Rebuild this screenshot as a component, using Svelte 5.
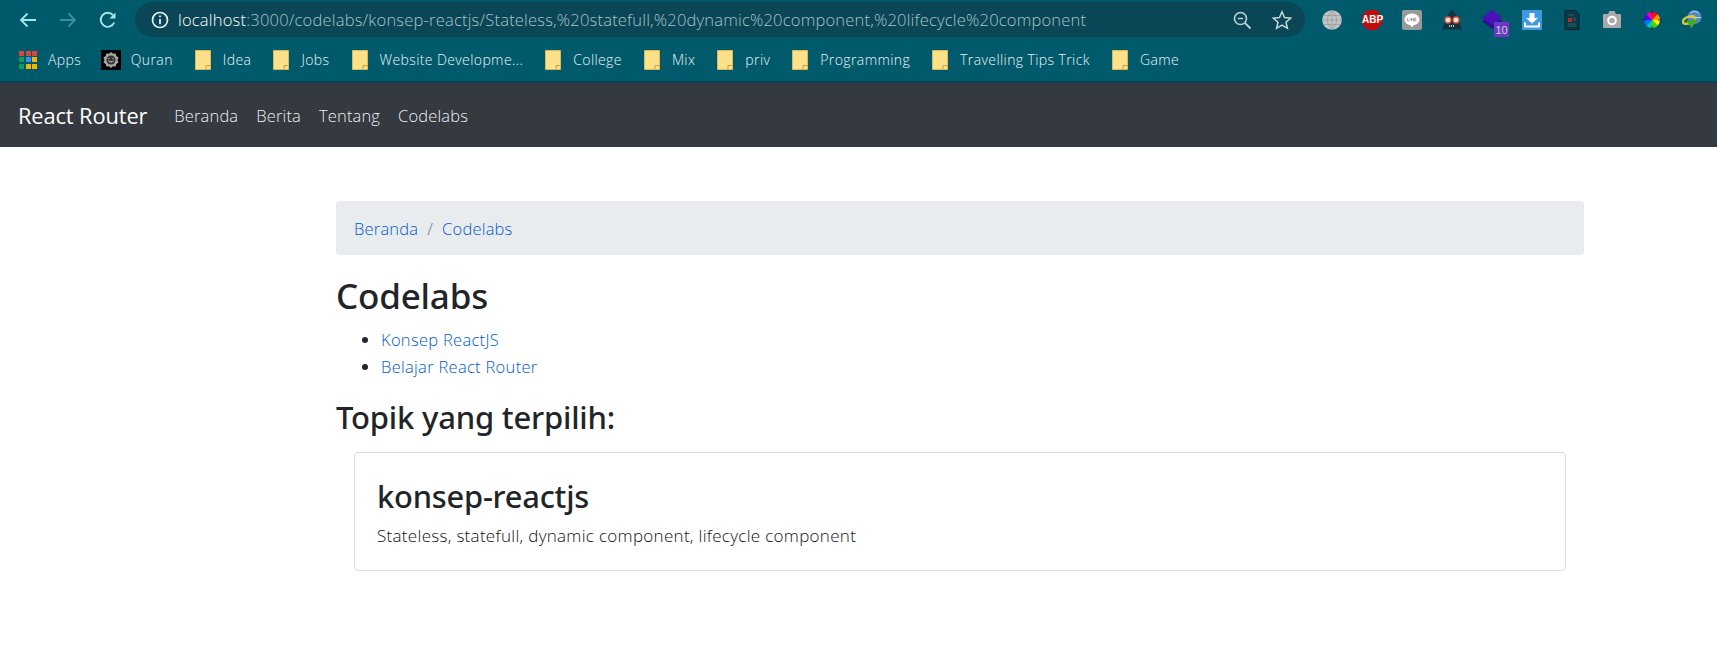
<script>
  const bookmarks = [
    { label: 'Idea' }, { label: 'Jobs' }, { label: 'Website Developme...' }, { label: 'College' },
    { label: 'Mix' }, { label: 'priv' }, { label: 'Programming' }, { label: 'Travelling Tips Trick' }, { label: 'Game' }
  ];
  const grid = [
    '#db4437','#db4437','#db4437',
    '#0f9d58','#4285f4','#f4b400',
    '#0f9d58','#f4b400','#f4b400'
  ];
  const wheel = ['#ff1010','#ff9900','#ffee00','#44dd00','#00ccaa','#0077ff','#5500ee','#ee00aa'];
  function wedge(i) {
    const a = (i * 45 - 90) * Math.PI / 180, b = ((i + 1) * 45 - 90) * Math.PI / 180, r = 8;
    return `M10 10L${10 + r * Math.cos(a)} ${10 + r * Math.sin(a)}A${r} ${r} 0 0 1 ${10 + r * Math.cos(b)} ${10 + r * Math.sin(b)}Z`;
  }
</script>

<div class="chrome">
  <div class="toolbar">
    <div class="navs">
      <svg viewBox="0 0 20 20" class="nav"><path d="M18 10H3M9.500 3.500L3 10l6.500 6.500" fill="none" stroke="#a5e6ea" stroke-width="1.800"/></svg>
      <svg viewBox="0 0 20 20" class="nav"><path d="M2 10h15M10.500 3.500L17 10l-6.500 6.500" fill="none" stroke="#3d8f9c" stroke-width="1.800"/></svg>
      <svg viewBox="0 0 20 20" class="nav"><path d="M16.200 12.500A7 7 0 1 1 15 5.200" fill="none" stroke="#a5e6ea" stroke-width="1.900"/><path d="M17.500 2.500v6h-6z" fill="#a5e6ea"/></svg>
    </div>
    <div class="omnibox">
      <svg viewBox="0 0 20 20" class="info"><circle cx="10" cy="10" r="7.500" fill="none" stroke="#e4f1f3" stroke-width="1.700"/><path d="M10 9v5.200M10 5.500v1.800" stroke="#e4f1f3" stroke-width="1.800"/></svg>
      <div class="url"><span class="host">localhost</span>:3000/codelabs/konsep-reactjs/Stateless,%20statefull,%20dynamic%20component,%20lifecycle%20component</div>
      <svg viewBox="0 0 20 20" class="omni-ic zoomic"><circle cx="8.500" cy="8.500" r="6" fill="none" stroke="#b9d2d7" stroke-width="1.600"/><path d="M13 13l5.500 5.500" stroke="#b9d2d7" stroke-width="1.800"/><path d="M5.800 8.500h5.400" stroke="#b9d2d7" stroke-width="1.400"/></svg>
      <svg viewBox="0 0 20 20" class="omni-ic star"><path d="M10 1.800l2.500 5.700 6.200.6-4.700 4.100 1.400 6.100L10 15.200l-5.400 3.100L6 12.200 1.300 8.100l6.200-.6z" fill="none" stroke="#c5dadf" stroke-width="1.500"/></svg>
    </div>
    <div class="exts">
      <div class="ext">
        <svg viewBox="0 0 20 20"><circle cx="10" cy="10" r="9.800" fill="#c2c5c5"/><path d="M.5 10h19M2 5.500h16M2 14.500h16M10 .5v19M10 .5c-6 5-6 14 0 19M10 .5c6 5 6 14 0 19" fill="none" stroke="#8f9698" stroke-width=".7"/></svg>
      </div>
      <div class="ext">
        <svg viewBox="0 0 20 20"><path d="M6 0h8l6 6v8l-6 6H6l-6-6V6z" fill="#c40c0c"/></svg>
        <span class="abp">ABP</span>
      </div>
      <div class="ext">
        <svg viewBox="0 0 20 20"><rect width="20" height="20" rx="2" fill="#9a9a9a"/><ellipse cx="10" cy="9.500" rx="7.500" ry="6" fill="#fff"/><path d="M8 14l2 3.500 2.500-3.500z" fill="#fff"/><path d="M5.500 8v3h1.500M8 8v3M9.500 11V8l2 3V8M14.500 8h-2v3h2M12.500 9.500h1.500" fill="none" stroke="#8d8d8d" stroke-width=".7"/></svg>
      </div>
      <div class="ext">
        <svg viewBox="0 0 20 20"><path d="M10 0c2 .5 3.500 4 4.500 7L20 19.500H0L5.500 7C6.500 4 8 .5 10 0z" fill="#14323f"/><circle cx="6" cy="10" r="3" fill="#f6e6da" stroke="#e8543c" stroke-width="1.300"/><circle cx="14" cy="10" r="3" fill="#f6e6da" stroke="#e8543c" stroke-width="1.300"/><path d="M7 16h6" stroke="#b8c6ca" stroke-width="2" stroke-dasharray="1 1"/></svg>
      </div>
      <div class="ext">
        <svg viewBox="0 0 20 20"><path d="M0 11l10-5 10 5-10 8z" fill="#2d0f9a"/><path d="M0 7.500L10 0l10 7.500-10 7z" fill="#4a11b8"/></svg>
        <span class="badge">10</span>
      </div>
      <div class="ext">
        <svg viewBox="0 0 20 20"><rect width="20" height="20" fill="#3d9ae0"/><path d="M7.500 3h5v5h3.500L10 13.500 4 8h3.500z" fill="#fff"/><path d="M3 12.500v4h14v-4" fill="none" stroke="#fff" stroke-width="2"/></svg>
      </div>
      <div class="ext">
        <svg viewBox="0 0 20 20"><path d="M3 .5h10l4 4v15H3z" fill="#0b3a46" stroke="#04222b"/><rect x="6" y="8" width="4" height="4" fill="#b02a30"/><path d="M6 5h6M11 8h3M11 10h3M6 14h8M6 16h8" stroke="#1e6472"/></svg>
      </div>
      <div class="ext">
        <svg viewBox="0 0 20 20"><path d="M2 4h4l1.500-3h5L14 4h4a1 1 0 0 1 1 1v12a1 1 0 0 1-1 1H2a1 1 0 0 1-1-1V5a1 1 0 0 1 1-1z" fill="#a9a9a9"/><circle cx="10" cy="10.500" r="4.800" fill="#fff"/><circle cx="10" cy="10.500" r="2.800" fill="#a9a9a9"/></svg>
      </div>
      <div class="ext">
        <svg viewBox="0 0 20 20">
          {#each wheel as c, i}<path d={wedge(i)} fill={c}/>{/each}
          <path d="M10 0v4M10 16v4M0 10h4M16 10h4" stroke="#222" stroke-width=".8"/>
        </svg>
      </div>
      <div class="ext">
        <svg viewBox="0 0 20 20"><circle cx="12.500" cy="7" r="7" fill="#4f86cc"/><path d="M8 3.500c2-2.500 7-2.500 9 0M6 7.500h13" stroke="#dbe8f4" fill="none" stroke-width=".8"/><ellipse cx="7" cy="10" rx="6.500" ry="3.200" transform="rotate(-20 7 10)" fill="none" stroke="#d9c437" stroke-width="2.400"/><path d="M4 10.500l12-1.500-6.500 9z" fill="#45a82c"/></svg>
      </div>
    </div>
  </div>

  <div class="bookmarks">
    <div class="bm apps">
      <div class="grid">{#each grid as c}<i style:background={c}></i>{/each}</div>
      <span>Apps</span>
    </div>
    <div class="bm quran">
      <svg viewBox="0 0 20 20" class="qicon"><rect width="20" height="20" fill="#000"/><path d="M10 2l2 1.800 2.700-.3.600 2.600 2.300 1.400L16.500 10l1.100 2.500-2.300 1.400-.6 2.600-2.700-.3L10 18l-2-1.800-2.700.3-.6-2.600-2.300-1.400L3.500 10 2.400 7.500l2.300-1.400.6-2.600 2.700.3z" fill="#a8a39b"/><circle cx="10" cy="10" r="4.500" fill="#333"/><path d="M7.500 10.500c1 2 4 2 5 0M8 8v1M12 8v1" stroke="#eee" fill="none" stroke-width=".9"/></svg>
      <span>Quran</span>
    </div>
    {#each bookmarks as b}
      <div class="bm">
        <svg viewBox="0 0 16 20" class="folder"><path d="M.5 .5h15v19H.5z" fill="#fde08a" stroke="#d9bb5c"/><path d="M11 19.500v-4h4.500" fill="none" stroke="#c9a23a"/></svg>
        <span>{b.label}</span>
      </div>
    {/each}
  </div>
</div>

<nav class="navbar">
  <a class="brand" href="#/">React Router</a>
  <a class="link" href="#/">Beranda</a>
  <a class="link" href="#/">Berita</a>
  <a class="link" href="#/">Tentang</a>
  <a class="link" href="#/">Codelabs</a>
</nav>

<main class="container">
  <ol class="breadcrumb">
    <li><a href="#/">Beranda</a></li>
    <li class="sep">/</li>
    <li><a href="#/">Codelabs</a></li>
  </ol>
  <h2 class="title">Codelabs</h2>
  <ul class="topics">
    <li><a href="#/">Konsep ReactJS</a></li>
    <li><a href="#/">Belajar React Router</a></li>
  </ul>
  <h3 class="sub">Topik yang terpilih:</h3>
  <section class="card">
    <h2 class="card-title">konsep-reactjs</h2>
    <p>Stateless, statefull, dynamic component, lifecycle component</p>
  </section>
</main>

<style>
  :global(body) {
    margin: 0;
    background: #fff;
    font-family: "Open Sans", "Noto Sans", sans-serif;
    color: #212529;
    overflow: hidden;
  }
  a { text-decoration: none; }

  .chrome { background: #015a6c; height: 81px; border-bottom: 2px solid #06424f; }
  .toolbar { height: 40px; display: flex; align-items: center; }
  .navs { display: flex; gap: 20px; margin-left: 18px; width: 117px; flex: none; }
  .nav { width: 20px; height: 20px; }
  .omnibox {
    width: 1170px; height: 35px; margin-top: -1px; border-radius: 18px; background: #0a4655; flex: none;
    display: flex; align-items: center; position: relative;
  }
  .info { width: 20px; height: 20px; margin-left: 15px; flex: none; }
  .url {
    margin-left: 8px; flex: 1; font-size: 16.500px; letter-spacing: .2px; color: #a6c3ca; white-space: nowrap; font-weight: 300;
  }
  .host { color: #fff; }
  .omni-ic { width: 20px; height: 20px; flex: none; }
  .zoomic { margin-right: 20px; }
  .star { margin-right: 13px; }
  .exts { display: flex; margin-left: 17px; gap: 20px; flex: none; }
  .ext { width: 20px; height: 20px; position: relative; }
  .ext svg { width: 20px; height: 20px; display: block; }
  .abp {
    position: absolute; inset: 0; color: #fff; font: 700 10px/20px "Liberation Sans", sans-serif; text-align: center;
  }
  .badge {
    position: absolute; left: 12px; top: 12px; width: 15px; height: 15px; background: #6a38c2; color: #d9cdf2;
    font: 11px/16px "Liberation Sans", sans-serif; text-align: center;
  }

  .bookmarks { height: 39px; display: flex; align-items: center; padding-left: 19px; }
  .bm { display: flex; align-items: center; gap: 12px; margin-right: 22px; font-size: 14px; letter-spacing: .4px; color: #eaf3f4; font-weight: 300; white-space: nowrap; }
  .apps { gap: 11px; margin-right: 19.500px; }
  .quran { gap: 10px; margin-right: 22px; }
  .grid { display: grid; grid-template-columns: repeat(3, 5px); grid-auto-rows: 5px; gap: 1.500px; width: 18px; }
  .qicon { width: 20px; height: 20px; }
  .folder { width: 16px; height: 20px; }

  .navbar { height: 64px; box-sizing: border-box; padding: 1px 0 0 18px; background: #343a40; display: flex; align-items: center; }
  .brand { color: #fff; font-size: 21.800px; margin-right: 27px; letter-spacing: -.1px; }
  .link { color: rgba(255,255,255,.95); font-size: 16.500px; letter-spacing: .15px; margin-right: 18px; font-weight: 300; }

  .container { margin: 54px 0 0 336px; width: 1248px; }
  .breadcrumb {
    list-style: none; margin: 0; padding: 1px 18px 0; height: 54px; box-sizing: border-box; background: #e9ecef; border-radius: 4px;
    display: flex; align-items: center; gap: 9px; font-size: 16.500px; letter-spacing: .2px; font-weight: 300;
  }
  .breadcrumb a, .topics a { color: #005cc8; }
  .sep { color: #6c757d; }
  .title { font-family: "Noto Sans", sans-serif; font-size: 35px; font-weight: 500; line-height: 42px; margin: 20px 0 0; letter-spacing: -.2px; }
  .topics { margin: 9px 0 0; padding: 0 0 0 45px; font-size: 16.500px; letter-spacing: .3px; line-height: 27px; font-weight: 300; }
  .sub { font-family: "Noto Sans", sans-serif; font-size: 31px; font-weight: 500; line-height: 37px; margin: 19px 0 0; letter-spacing: -.2px; }
  .card {
    margin: 16px 18px 0; height: 119px; border: 1px solid #dcdfe2; border-radius: 4px; box-sizing: border-box; padding: 24px 22px 0;
  }
  .card-title { font-family: "Noto Sans", sans-serif; font-size: 30.800px; font-weight: 500; line-height: 38px; margin: 0; letter-spacing: -.2px; }
  .card p { margin: 8px 0 0; font-size: 17px; letter-spacing: .3px; line-height: 26px; font-weight: 300; color: #111; }
</style>
